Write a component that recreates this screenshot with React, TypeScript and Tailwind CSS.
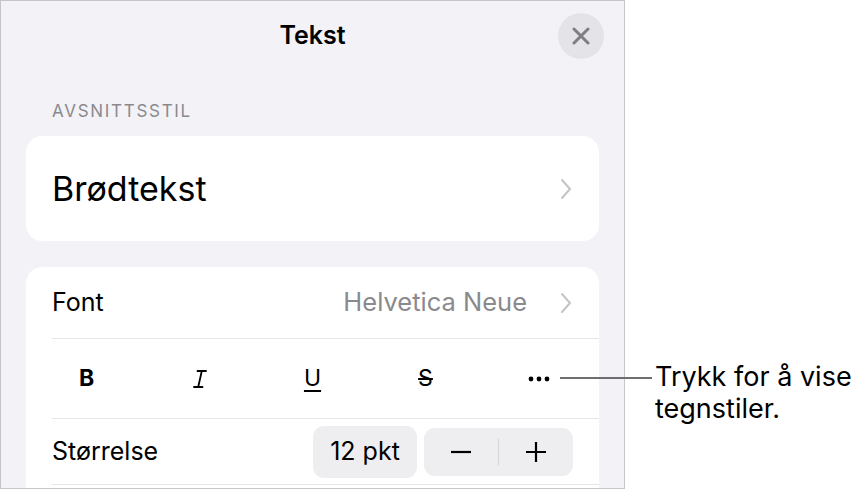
import React from "react";

function Chevron() {
  return (
    <svg width="12" height="22" viewBox="0 0 12 22" fill="none">
      <path d="M2 2 L10 11 L2 20" stroke="#c4c4c7" strokeWidth="2" strokeLinecap="round" strokeLinejoin="round" />
    </svg>
  );
}

export default function App() {
  return (
    <div className="w-[865px] h-[491px] bg-white relative overflow-hidden" style={{ fontFamily: "Inter, Roboto, 'Noto Sans', sans-serif" }}>
      <div className="w-[625px] h-[489px] border border-[#c6c6c8] bg-[#f2f2f7] flex flex-col overflow-hidden">
        <div className="h-[70px] relative flex items-center justify-center shrink-0">
          <div className="text-[25px] font-semibold text-black">Tekst</div>
          <div className="absolute right-[20px] top-[12px] w-[46px] h-[46px] rounded-full bg-[#e3e3e8] flex items-center justify-center">
            <svg width="18" height="18" viewBox="0 0 18 18">
              <path d="M2 2 L16 16 M16 2 L2 16" stroke="#7e7e83" strokeWidth="3" strokeLinecap="round" />
            </svg>
          </div>
        </div>
        <div className="mt-[29px] pl-[51px] text-[17px] leading-[22px] text-[#8a8a8e] tracking-[1.7px]">AVSNITTSSTIL</div>
        <div className="mt-[14px] mx-[25px] h-[105px] bg-white rounded-[16px] flex items-center justify-between pl-[26px] pr-[27px] shrink-0">
          <div className="text-[34px] text-black">Brødtekst</div>
          <Chevron />
        </div>
        <div className="mt-[26px] mx-[25px] bg-white rounded-t-[16px] flex-1 flex flex-col">
          <div className="h-[71px] flex items-center justify-between ml-[26px] pr-[27px]">
            <div className="text-[25px] text-black">Font</div>
            <div className="flex items-center gap-[33px]">
              <div className="text-[25.5px] text-[#8a8a8e]">Helvetica Neue</div>
              <Chevron />
            </div>
          </div>
          <div className="ml-[26px] h-[1px] bg-[#e5e5ea]" />
          <div className="h-[79px] flex items-center px-[4px]">
            <div className="flex-1 flex items-center justify-center text-[23px] font-bold text-black">B</div>
            <div className="flex-1 flex items-center justify-center">
              <svg width="16" height="20" viewBox="0 0 16 20">
                <path d="M5.5 2 H14 M2 18 H10.5 M9.8 2 L6.2 18" stroke="#000" strokeWidth="1.8" strokeLinecap="round" />
              </svg>
            </div>
            <div className="flex-1 flex items-center justify-center text-[23px] text-black underline underline-offset-[4px] decoration-[1.5px]">U</div>
            <div className="flex-1 flex items-center justify-center text-[23px] text-black line-through decoration-[1.5px]">S</div>
            <div className="flex-1 flex items-center justify-center">
              <svg width="22" height="6" viewBox="0 0 22 6">
                <circle cx="3" cy="3" r="2.4" fill="#000" />
                <circle cx="11" cy="3" r="2.4" fill="#000" />
                <circle cx="19" cy="3" r="2.4" fill="#000" />
              </svg>
            </div>
          </div>
          <div className="ml-[26px] h-[1px] bg-[#e5e5ea]" />
          <div className="h-[65px] flex items-center justify-between ml-[26px] pr-[26px]">
            <div className="text-[25px] text-black">Størrelse</div>
            <div className="flex items-center gap-[7px]">
              <div className="w-[104px] h-[52px] rounded-[11px] bg-[#eeeef0] flex items-center justify-center text-[25px] text-black">12 pkt</div>
              <div className="w-[149px] h-[48px] rounded-[11px] bg-[#eeeef0] flex items-center">
                <div className="flex-1 flex items-center justify-center">
                  <svg width="22" height="4" viewBox="0 0 22 4"><path d="M1 2 H21" stroke="#000" strokeWidth="2.2" /></svg>
                </div>
                <div className="w-[1px] h-[26px] bg-[#d4d4d8]" />
                <div className="flex-1 flex items-center justify-center">
                  <svg width="22" height="22" viewBox="0 0 22 22"><path d="M1 11 H21 M11 1 V21" stroke="#000" strokeWidth="2.2" /></svg>
                </div>
              </div>
            </div>
          </div>
          <div className="ml-[26px] h-[1px] bg-[#e5e5ea]" />
        </div>
      </div>
      <div className="absolute left-[560px] top-[361px] flex items-start">
        <div className="w-[92px] h-[2px] bg-[#6e6e6e] mt-[16px]" />
        <div className="ml-[3px] text-[27px] leading-[32px] text-black">
          Trykk for å vise
          <br />
          tegnstiler.
        </div>
      </div>
    </div>
  );
}
